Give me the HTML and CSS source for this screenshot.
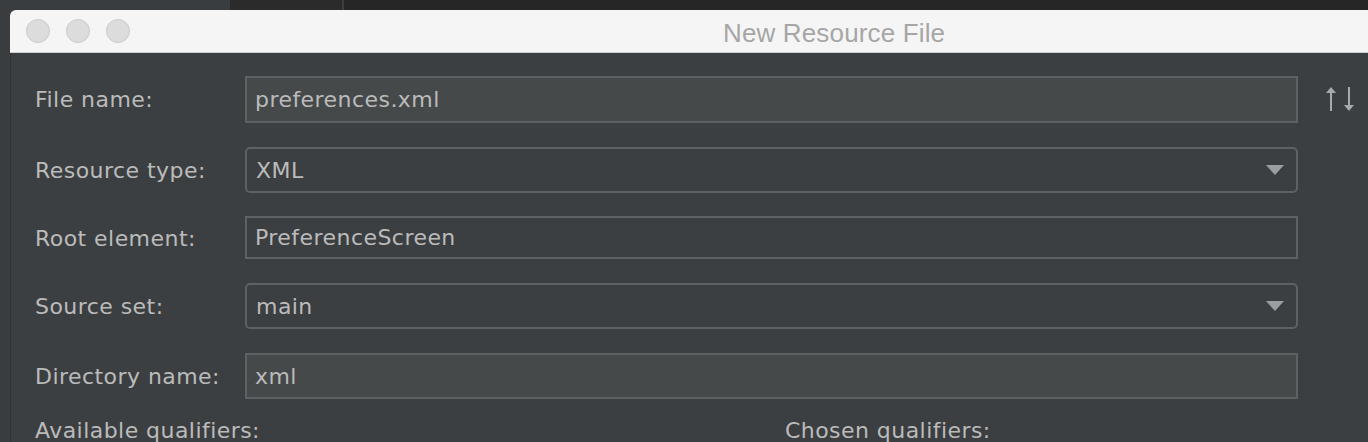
FILE: index.html
```html
<!DOCTYPE html>
<html>
<head>
<meta charset="utf-8">
<link rel="stylesheet" href="styles.css">
</head>
<body>
<div class="topstrip">
  <div class="seg seg-a"></div>
  <div class="seg seg-b"></div>
  <div class="seg seg-line"></div>
  <div class="seg seg-c"></div>
</div>
<div class="window">
  <div class="titlebar">
    <div class="lights">
      <span class="light"></span>
      <span class="light"></span>
      <span class="light"></span>
    </div>
    <div class="title">New Resource File</div>
  </div>
  <div class="content">
    <div class="form">
      <div class="label">File name:</div>
      <div class="field text h47">preferences.xml</div>
      <div class="side">
        <svg width="30" height="26" viewBox="0 0 30 26">
          <path d="M5 0 L0 6 L10 6 Z" fill="#a7a9ab"/>
          <rect x="4" y="5" width="2" height="19" fill="#a7a9ab"/>
          <rect x="22" y="0" width="2" height="19" fill="#a7a9ab"/>
          <path d="M23 24 L18 18 L28 18 Z" fill="#a7a9ab"/>
        </svg>
      </div>

      <div class="label">Resource type:</div>
      <div class="field combo h46">XML
        <svg class="arrow" width="18" height="10" viewBox="0 0 18 10"><path d="M0 0 L18 0 L9 10 Z" fill="#9a9da1"/></svg>
      </div>
      <div class="side"></div>

      <div class="label">Root element:</div>
      <div class="field plain h43">PreferenceScreen</div>
      <div class="side"></div>

      <div class="label">Source set:</div>
      <div class="field combo h46">main
        <svg class="arrow" width="18" height="10" viewBox="0 0 18 10"><path d="M0 0 L18 0 L9 10 Z" fill="#9a9da1"/></svg>
      </div>
      <div class="side"></div>

      <div class="label">Directory name:</div>
      <div class="field text h46">xml</div>
      <div class="side"></div>
    </div>
    <div class="qualifiers">
      <div class="qlabel">Available qualifiers:</div>
      <div class="qlabel">Chosen qualifiers:</div>
    </div>
  </div>
</div>
</body>
</html>
```

FILE: styles.css
```css
html, body {
  margin: 0;
  padding: 0;
}
body {
  width: 1368px;
  height: 442px;
  overflow: hidden;
  background: #3a3d40;
}
.topstrip {
  display: flex;
  height: 10px;
}
.seg-a { width: 230px; background: #3a3d40; }
.seg-b { width: 112px; background: #2b2b2b; }
.seg-line { width: 2px; background: #3d3d3d; }
.seg-c { flex: 1; background: #262626; }

.window {
  margin-left: 10px;
  height: 432px;
  display: flex;
  flex-direction: column;
}
.titlebar {
  height: 42px;
  background: #f5f5f5;
  border-bottom: 1px solid #d0d0d0;
  border-top-left-radius: 6px;
  display: flex;
  align-items: center;
  flex-shrink: 0;
}
.lights {
  display: flex;
  gap: 16px;
  padding-left: 16px;
}
.light {
  width: 22px;
  height: 22px;
  border-radius: 50%;
  background: #dcdcdc;
  border: 1px solid #cbcbcb;
}
.title {
  margin-left: 593px;
  font-family: "Liberation Sans", Arial, sans-serif;
  font-size: 26px;
  letter-spacing: 0.15px;
  color: #a6a6a6;
  white-space: nowrap;
  padding-top: 4px;
}
.content {
  flex: 1;
  background: #3c3f41;
  border-left: 1px solid #303234;
  padding: 23px 0 0 24px;
  font-family: "DejaVu Sans", sans-serif;
  font-size: 22px;
  letter-spacing: 0.45px;
  color: #bbbbbb;
}
.form {
  display: grid;
  grid-template-columns: 210px 1053px 70px;
  row-gap: 24px;
  align-items: center;
}
.label {
  white-space: nowrap;
}
.field {
  box-sizing: border-box;
  border: 2px solid #5e6163;
  display: flex;
  align-items: center;
  padding-left: 8px;
  white-space: nowrap;
}
.h47 { height: 47px; }
.h46 { height: 46px; }
.h43 { height: 43px; margin-top: -1px; }
.text { background: #45494a; }
.plain { background: #3c3f41; }
.combo {
  background: #3c3f41;
  border-radius: 5px;
  padding-left: 9px;
  justify-content: space-between;
  padding-right: 12px;
}
.arrow {
  display: block;
}
.side {
  display: flex;
  align-items: center;
  padding-left: 28px;
}
.side svg { display: block; }
.qualifiers {
  display: grid;
  grid-template-columns: 750px 1fr;
  margin-top: 19px;
}
.qlabel {
  white-space: nowrap;
}
```
